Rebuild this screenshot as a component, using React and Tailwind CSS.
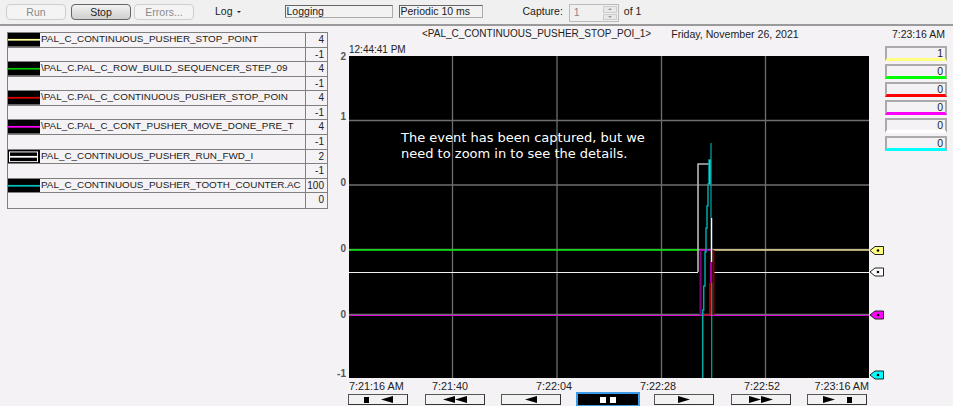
const rows = [
    { name: 'PAL_C_CONTINUOUS_PUSHER_STOP_POINT', max: '4', min: '-1', line: '#ffff99' },
    { name: '\\PAL_C.PAL_C_ROW_BUILD_SEQUENCER_STEP_09', max: '4', min: '-1', line: '#00c800' },
    { name: '\\PAL_C.PAL_C_CONTINUOUS_PUSHER_STOP_POIN', max: '4', min: '-1', line: '#e00000' },
    { name: '\\PAL_C.PAL_C_CONT_PUSHER_MOVE_DONE_PRE_T', max: '4', min: '-1', line: '#ff00ff' },
    { name: 'PAL_C_CONTINUOUS_PUSHER_RUN_FWD_I', max: '2', min: '-1', line: '#ffffff', boxed: true },
    { name: 'PAL_C_CONTINUOUS_PUSHER_TOOTH_COUNTER.AC', max: '100', min: '0', line: '#00c0c0' },
];

const legend = [
    { value: '1', bar: 'border-b-[#ffff80]' },
    { value: '0', bar: 'border-b-[#00ff00]' },
    { value: '0', bar: 'border-b-[#ff0000]' },
    { value: '0', bar: 'border-b-[#ff00ff]' },
    { value: '0', bar: 'border-b-white' },
    { value: '0', bar: 'border-b-[#00ffff]' },
];

const yLabels = [
    { text: '2', height: 'h-[60px]' },
    { text: '1', height: 'h-[66px]' },
    { text: '0', height: 'h-[66px]' },
    { text: '0', height: 'h-[66px]' },
    { text: '0', height: 'h-[59px]' },
    { text: '-1', height: 'h-[12px]' },
];

const markers = [
    { y: 194.5, fill: '#ffff80' },
    { y: 216, fill: '#ffffff' },
    { y: 259, fill: '#ff00ff' },
    { y: 319, fill: '#00ffff' },
];

const scrollButtons = [
    ['stop', 'left'],
    ['left', 'left'],
    ['left'],
    ['pause'],
    ['right'],
    ['right', 'right'],
    ['right', 'stop'],
];

function PenSwatch({ line, boxed }) {
    return (
        <svg className="block h-full w-[32px] shrink-0" viewBox="0 0 32 14" preserveAspectRatio="none">
            <rect width="32" height="14" fill="#000" />
            {boxed && <rect x="1.5" y="2" width="28" height="10" fill="none" stroke={line} strokeWidth="1" />}
            <line x1={boxed ? 1 : 0} x2={boxed ? 30 : 32} y1="7" y2="7" stroke={line} strokeWidth="1.8" />
        </svg>
    );
}

function Glyph({ kind }) {
    if (kind === 'pause') {
        return (
            <span className="flex gap-[4px]">
                <span className="h-[6px] w-[6px] bg-white" />
                <span className="h-[6px] w-[6px] bg-white" />
            </span>
        );
    }
    if (kind === 'stop') {
        return <span className="h-[6px] w-[5px] bg-black" />;
    }
    return (
        <svg width="12" height="7" viewBox="0 0 12 7">
            <polygon points={kind === 'left' ? '0,3.5 12,0 12,7' : '0,0 12,3.5 0,7'} fill="#000" />
        </svg>
    );
}

function ScrollButton({ glyphs }) {
    const focused = glyphs[0] === 'pause';
    const spread = glyphs.includes('stop');
    return (
        <button
            className={
                focused
                    ? 'flex h-[11px] w-[60px] items-center justify-center bg-black outline outline-2 outline-[#3d9be9]'
                    : `flex h-[11px] w-[60px] items-center justify-center ${spread ? 'gap-3' : 'gap-0'} border border-[#555] border-b-[#333] border-r-[#333] bg-[#f2f2f2]`
            }
        >
            {glyphs.map((kind, i) => (
                <Glyph key={i} kind={kind} />
            ))}
        </button>
    );
}

function Plot() {
    const grid = '#6e6e6e';
    return (
        <svg className="block" width="520" height="322" viewBox="0 0 520 322">
            <rect width="520" height="322" fill="#000" />
            {[103.5, 208, 312.5, 416.5].map((x) => (
                <line key={x} x1={x} x2={x} y1="0" y2="322" stroke={grid} strokeWidth="1.3" />
            ))}
            {[64.5, 129, 193.5, 258.5].map((y) => (
                <line key={y} x1="0" x2="520" y1={y} y2={y} stroke={grid} strokeWidth="1.3" />
            ))}

            {/* flat traces */}
            <line x1="0" x2="351" y1="194" y2="194" stroke="#00f000" strokeWidth="1.6" />
            <line x1="351" x2="362" y1="194" y2="194" stroke="#e000e0" strokeWidth="1.5" />
            <line x1="364" x2="520" y1="194" y2="194" stroke="#e8d890" strokeWidth="1.5" />
            <line x1="0" x2="520" y1="259.5" y2="259.5" stroke="#e000e0" />

            {/* run fwd step */}
            <line x1="0" x2="349" y1="216.5" y2="216.5" stroke="#f0f0f0" />
            <polyline points="349,216 349,108 360,108" fill="none" stroke="#b8b8b8" strokeWidth="1.6" />
            <line x1="364" x2="520" y1="216.5" y2="216.5" stroke="#f0f0f0" />

            {/* move done / stop point edges */}
            <line x1="351.5" x2="351.5" y1="194" y2="259" stroke="#800080" strokeWidth="2" />
            <line x1="354" x2="361" y1="259" y2="259" stroke="#c00000" strokeWidth="1.2" />
            <line x1="361" x2="361" y1="227" y2="259" stroke="#e00000" strokeWidth="1.4" />
            <line x1="364.5" x2="364.5" y1="194" y2="259" stroke="#800000" strokeWidth="2" />
            <line x1="362" x2="362" y1="206" y2="227" stroke="#e000e0" strokeWidth="1.5" />
            <line x1="362.5" x2="362.5" y1="162" y2="206" stroke="#e8ffff" strokeWidth="1.5" />

            {/* tooth counter */}
            <polyline
                points="353.7,322 353.7,254 354.7,254 354.7,230 356,230 356,196 357,196 357,172 358,172 358,150 359,150 359,128 360,128 360,104 362,104"
                fill="none"
                stroke="#00a8a8"
                strokeWidth="1.5"
            />
            <line x1="361" x2="361" y1="104" y2="128" stroke="#00ffff" strokeWidth="1.5" />
            <line x1="362" x2="362" y1="87" y2="162" stroke="#00a8a8" strokeWidth="1.2" />
            <line x1="362.7" x2="362.7" y1="227" y2="322" stroke="#00a8a8" strokeWidth="1.2" />
        </svg>
    );
}

function Markers() {
    return (
        <svg className="block overflow-visible" width="16" height="322" viewBox="0 0 16 322">
            {markers.map((m) => (
                <g key={m.y}>
                    <polygon
                        points={`1,${m.y} 6,${m.y - 4} 14.5,${m.y - 4} 14.5,${m.y + 4} 6,${m.y + 4}`}
                        fill={m.fill}
                        stroke="#222"
                    />
                    <circle cx="9" cy={m.y} r="1.3" fill="#000" />
                </g>
            ))}
        </svg>
    );
}

export default function App() {
    return (
        <div className="h-[406px] w-[953px] overflow-hidden bg-[#f4f2f5] font-['Liberation_Sans',sans-serif] text-[10.5px] text-[#222]">
            {/* Toolbar */}
            <div className="flex h-[26px] items-start border-b-2 border-[#9a9a9a] bg-[#f0f0f0] pl-[6px] pt-[4px]">
                <button className="h-[16px] w-[60px] rounded-sm border border-[#cfcfcf] bg-[#f4f4f4] text-[#8a8a8a]">Run</button>
                <button className="ml-[5px] h-[16px] w-[60px] rounded-sm border border-[#666] bg-linear-to-b from-[#f2f2f2] to-[#cfcfcf] text-[#222]">Stop</button>
                <button className="ml-[3px] h-[16px] w-[60px] rounded-sm border border-[#cfcfcf] bg-[#f4f4f4] text-[#8a8a8a]">Errors...</button>
                <span className="ml-[21px] mt-[1px] flex items-center gap-1 leading-[12px]">
                    Log
                    <span className="mt-[1px] border-x-[2px] border-t-[2px] border-x-transparent border-t-[#222]" />
                </span>
                <div className="ml-[44px] mt-[1px] h-[13px] w-[108px] border border-[#aaa] border-l-[#666] border-t-[#666] bg-[#f2f2f2] pl-[1px] leading-[11px]">Logging</div>
                <div className="ml-[6px] mt-[1px] h-[13px] w-[84px] border border-[#aaa] border-l-[#666] border-t-[#666] bg-[#f2f2f2] pl-[1px] leading-[11px]">Periodic 10 ms</div>
                <span className="ml-[40px] mt-[1px] leading-[12px]">Capture:</span>
                <div className="ml-[6px] flex h-[18px] w-[50px] justify-between border border-[#bbb] bg-[#f0f0f0] pl-[4px] text-[#888]">
                    <span className="leading-[14px]">1</span>
                    <span className="flex w-[16px] flex-col gap-px p-px">
                        <span className="flex flex-1 items-center justify-center border border-[#ccc] bg-[#e8e8e8]">
                            <span className="border-x-[2px] border-b-[2px] border-x-transparent border-b-[#999]" />
                        </span>
                        <span className="flex flex-1 items-center justify-center border border-[#ccc] bg-[#e8e8e8]">
                            <span className="border-x-[2px] border-t-[2px] border-x-transparent border-t-[#999]" />
                        </span>
                    </span>
                </div>
                <span className="ml-[5px] mt-[1px] leading-[12px]">of 1</span>
            </div>

            <div className="flex">
                {/* Pen table */}
                <div className="ml-[7px] mt-[6px] grid h-[177px] w-[321px] grid-rows-12 self-start border border-[#808080] bg-[#f4f2f5]">
                    {rows.map((row) => [
                        <div key={row.name} className="flex min-h-0 border-b border-[#808080]">
                            <PenSwatch line={row.line} boxed={row.boxed} />
                            <div className="min-w-0 flex-1 truncate pl-px text-[9.9px] leading-[12px]">{row.name}</div>
                            <div className="w-[22px] shrink-0 border-l border-[#808080] pr-[3px] text-right text-[10px] leading-[14px]">{row.max}</div>
                        </div>,
                        <div key={row.name + '-min'} className="flex min-h-0 justify-end border-b border-[#808080] last:border-b-0">
                            <div className="w-[22px] shrink-0 border-l border-[#808080] pr-[3px] text-right text-[10px] leading-[14px]">{row.min}</div>
                        </div>,
                    ])}
                </div>

                {/* Chart */}
                <div className="ml-[7px] w-[550px] shrink-0">
                    <div className="mt-[2px] flex h-[12px] items-center leading-[12px]">
                        <span className="ml-[87px] text-[10px]">&lt;PAL_C_CONTINUOUS_PUSHER_STOP_POI_1&gt;</span>
                        <span className="ml-[20px] text-[10.6px]">Friday, November 26, 2021</span>
                    </div>
                    <div className="ml-[14px] mt-[3px] h-[13px] text-[10px] leading-[13px]">12:44:41 PM</div>
                    <div className="flex">
                        <div className="-mt-[5px] h-[327px] w-[14px] pr-[3px] text-right text-[10px] font-bold leading-[12px] text-[#555]">
                            {yLabels.map((label, i) => (
                                <div key={i} className={label.height}>{label.text}</div>
                            ))}
                        </div>
                        <div className="relative">
                            <Plot />
                            <p className="absolute left-[52px] top-[74px] font-['DejaVu_Sans',sans-serif] text-[13px] leading-[16px] text-white">
                                The event has been captured, but we
                                <br />
                                need to zoom in to see the details.
                            </p>
                        </div>
                        <Markers />
                    </div>
                    <div className="ml-[14px] mt-[2px] flex h-[12px] w-[520px] whitespace-nowrap text-[10.8px] leading-[12px]">
                        <span className="w-[83px]">7:21:16 AM</span>
                        <span className="w-[104px]">7:21:40</span>
                        <span className="w-[104px]">7:22:04</span>
                        <span className="w-[104px]">7:22:28</span>
                        <span className="w-[65px]">7:22:52</span>
                        <span className="flex-1 text-right">7:23:16 AM</span>
                    </div>
                    <div className="ml-[13px] mt-[2px] flex gap-[16.5px]">
                        {scrollButtons.map((glyphs, i) => (
                            <ScrollButton key={i} glyphs={glyphs} />
                        ))}
                    </div>
                </div>

                {/* Current values */}
                <div className="w-[62px] shrink-0 self-start">
                    <div className="mt-[2px] h-[12px] pr-[2px] text-right leading-[12px]">7:23:16 AM</div>
                    <div className="mt-[6px] flex flex-col gap-[3px]">
                        {legend.map((item, i) => (
                            <div
                                key={i}
                                className={`h-[15px] border-2 border-[#aaa] border-b-[3px] pr-[2px] text-right leading-[10px] ${item.bar}`}
                            >
                                {item.value}
                            </div>
                        ))}
                    </div>
                </div>
            </div>
        </div>
    );
}
